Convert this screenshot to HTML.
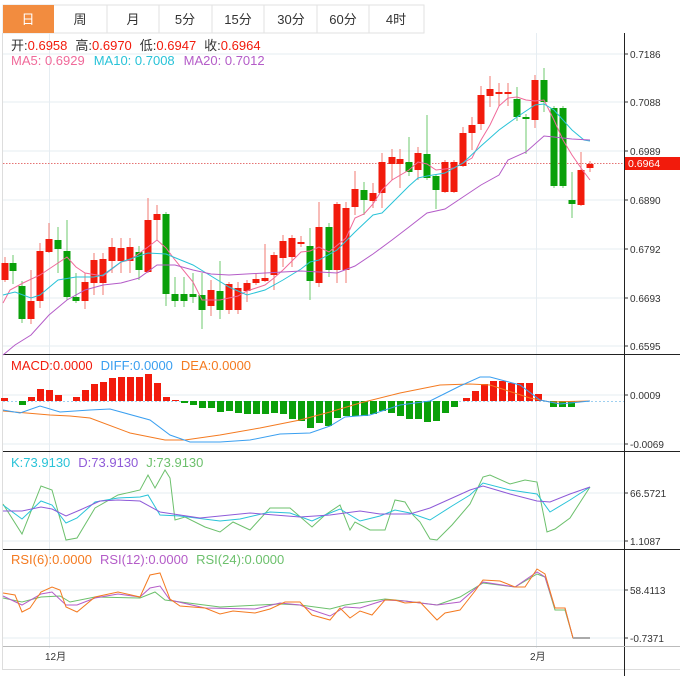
<!DOCTYPE html>
<html><head><meta charset="utf-8"><style>
html,body{margin:0;padding:0;background:#fff;width:680px;height:676px;overflow:hidden}
svg{display:block;font-family:"Liberation Sans","Noto Sans CJK SC",sans-serif}
</style></head><body>
<svg width="680" height="676" viewBox="0 0 680 676" xmlns="http://www.w3.org/2000/svg">
<!-- tabs -->
<rect x="3" y="5" width="421" height="28" fill="#fff" stroke="#e2e2e2"/>
<rect x="3" y="5" width="51" height="28" fill="#f28c3f"/>
<g stroke="#e2e2e2"><line x1="107" y1="5" x2="107" y2="33"/><line x1="159" y1="5" x2="159" y2="33"/><line x1="212" y1="5" x2="212" y2="33"/><line x1="264" y1="5" x2="264" y2="33"/><line x1="317" y1="5" x2="317" y2="33"/><line x1="369" y1="5" x2="369" y2="33"/></g>
<g font-size="13" text-anchor="middle" fill="#333">
<text x="28" y="24" fill="#fff">日</text><text x="80" y="24">周</text><text x="133" y="24">月</text><text x="185" y="24">5分</text><text x="238" y="24">15分</text><text x="291" y="24">30分</text><text x="343" y="24">60分</text><text x="396" y="24">4时</text>
</g>
<!-- frame -->
<line x1="2.5" y1="33" x2="2.5" y2="669" stroke="#ddd"/>
<line x1="2" y1="669.5" x2="680" y2="669.5" stroke="#ddd"/>
<line x1="624.5" y1="33" x2="624.5" y2="676" stroke="#222"/>
<!-- grids -->
<g stroke="#e6edf2">
<line x1="3" y1="54" x2="624" y2="54"/><line x1="3" y1="102" x2="624" y2="102"/><line x1="3" y1="151" x2="624" y2="151"/><line x1="3" y1="200" x2="624" y2="200"/><line x1="3" y1="249" x2="624" y2="249"/><line x1="3" y1="298" x2="624" y2="298"/><line x1="3" y1="346" x2="624" y2="346"/>
<line x1="3" y1="395" x2="624" y2="395"/><line x1="3" y1="444" x2="624" y2="444"/>
<line x1="3" y1="493" x2="624" y2="493"/><line x1="3" y1="541" x2="624" y2="541"/>
<line x1="3" y1="590" x2="624" y2="590"/><line x1="3" y1="638" x2="624" y2="638"/>
<line x1="49.5" y1="33" x2="49.5" y2="648"/><line x1="536.5" y1="33" x2="536.5" y2="648"/>
</g>
<g stroke="#222"><line x1="3" y1="354.5" x2="680" y2="354.5"/><line x1="3" y1="451.5" x2="680" y2="451.5"/><line x1="3" y1="549.5" x2="680" y2="549.5"/></g>
<line x1="3" y1="646.5" x2="680" y2="646.5" stroke="#bbb"/>
<!-- axis labels -->
<g font-size="10" fill="#333">
<g stroke="#333"><line x1="624" y1="54" x2="628" y2="54"/><line x1="624" y1="102" x2="628" y2="102"/><line x1="624" y1="151" x2="628" y2="151"/><line x1="624" y1="200" x2="628" y2="200"/><line x1="624" y1="249" x2="628" y2="249"/><line x1="624" y1="298" x2="628" y2="298"/><line x1="624" y1="346" x2="628" y2="346"/><line x1="624" y1="395" x2="628" y2="395"/><line x1="624" y1="444" x2="628" y2="444"/><line x1="624" y1="493" x2="628" y2="493"/><line x1="624" y1="541" x2="628" y2="541"/><line x1="624" y1="590" x2="628" y2="590"/><line x1="624" y1="638" x2="628" y2="638"/></g>
<text x="630" y="58">0.7186</text><text x="630" y="106">0.7088</text><text x="630" y="155">0.6989</text><text x="630" y="204">0.6890</text><text x="630" y="253">0.6792</text><text x="630" y="302">0.6693</text><text x="630" y="350">0.6595</text>
<text x="630" y="399">0.0009</text><text x="630" y="448">-0.0069</text>
<text x="630" y="497">66.5721</text><text x="630" y="545">1.1087</text>
<text x="630" y="594">58.4113</text><text x="630" y="642">-0.7371</text>
<text x="45" y="660">12月</text><text x="530" y="660">2月</text>
</g>
<!-- current price -->
<line x1="3" y1="163.5" x2="624" y2="163.5" stroke="#e57373" stroke-dasharray="1.5,1.5"/>
<rect x="625" y="157" width="55" height="13" fill="#f21b0c"/>
<text x="628" y="167" font-size="10.5" fill="#fff">0.6964</text>
<!-- info text -->
<g font-size="13">
<text x="11" y="50" fill="#333">开:<tspan fill="#f21b0c">0.6958</tspan><tspan dx="8">高:</tspan><tspan fill="#f21b0c">0.6970</tspan><tspan dx="8">低:</tspan><tspan fill="#f21b0c">0.6947</tspan><tspan dx="8">收:</tspan><tspan fill="#f21b0c">0.6964</tspan></text>
<text x="11" y="65"><tspan fill="#f06a9a">MA5: 0.6929</tspan><tspan dx="9" fill="#29c3d8">MA10: 0.7008</tspan><tspan dx="9" fill="#b45cc8">MA20: 0.7012</tspan></text>
<text x="11" y="370"><tspan fill="#f21b0c">MACD:0.0000</tspan><tspan dx="8" fill="#3a9ff0">DIFF:0.0000</tspan><tspan dx="8" fill="#f47a20">DEA:0.0000</tspan></text>
<text x="11" y="467"><tspan fill="#29c3d8">K:73.9130</tspan><tspan dx="8" fill="#8e5ad8">D:73.9130</tspan><tspan dx="8" fill="#6cc06c">J:73.9130</tspan></text>
<text x="11" y="564"><tspan fill="#f47a20">RSI(6):0.0000</tspan><tspan dx="8" fill="#b45cc8">RSI(12):0.0000</tspan><tspan dx="8" fill="#6cc06c">RSI(24):0.0000</tspan></text>
</g>
<!-- candles: wicks -->
<g stroke-width="1">
<g stroke="#f07a70">
<path d="M5 257V282M31 270V324M40 243V308M49 223V253M85 273V309M94 253V295M103 253V295M112 238V273M121 238V273M130 238V273M148 198V273M157 205V240M211 280V316M229 282V314M238 282V314M247 280V302M256 273V285M265 244V282M274 252V290M283 235V267M292 235V267M301 236V247M319 202V287M337 202V283M346 202V283M355 171V215M373 183V208M382 153V208M392 149V180M400 149V188M418 147V180M445 160V193M454 160V193M463 127V167M472 117V150M481 86V130M490 76V107M499 83V106M508 83V106M535 75V128M581 152V206M590 161V172"/>
</g>
<g stroke="#6cc86c">
<path d="M13 255V284M22 281V323M58 227V273M67 220V300M76 273V303M139 246V280M166 212V306M175 277V307M184 277V307M193 273V303M202 273V329M220 261V319M310 228V300M329 223V277M364 182V215M409 137V176M427 115V180M436 175V209M517 87V121M526 114V154M544 68V112M554 106V188M563 106V188M572 172V218"/>
</g>
</g>
<!-- candle bodies -->
<g fill="#f21b0c">
<rect x="1.5" y="263" width="7" height="17"/><rect x="27.5" y="301" width="7" height="18"/><rect x="36.5" y="251" width="7" height="50"/><rect x="45.5" y="239" width="7" height="13"/><rect x="81.5" y="282" width="7" height="19"/><rect x="90.5" y="260" width="7" height="23"/><rect x="99.5" y="259" width="7" height="24"/><rect x="108.5" y="247" width="7" height="14"/><rect x="117.5" y="248" width="7" height="13"/><rect x="126.5" y="247" width="7" height="14"/><rect x="144.5" y="220" width="7" height="52"/><rect x="153.5" y="214" width="7" height="6"/><rect x="207.5" y="290" width="7" height="16"/><rect x="225.5" y="284" width="7" height="26"/><rect x="234.5" y="288" width="7" height="22"/><rect x="243.5" y="283" width="7" height="8"/><rect x="252.5" y="279" width="7" height="4"/><rect x="261.5" y="278" width="7" height="3"/><rect x="270.5" y="255" width="7" height="20"/><rect x="279.5" y="241" width="7" height="17"/><rect x="288.5" y="238" width="7" height="19"/><rect x="297.5" y="242" width="7" height="2"/><rect x="315.5" y="227" width="7" height="56"/><rect x="333.5" y="204" width="7" height="66"/><rect x="342.5" y="208" width="7" height="62"/><rect x="351.5" y="189" width="7" height="18"/><rect x="369.5" y="193" width="7" height="8"/><rect x="378.5" y="162" width="7" height="31"/><rect x="388.5" y="157" width="7" height="7"/><rect x="396.5" y="159" width="7" height="5"/><rect x="414.5" y="153" width="7" height="17"/><rect x="441.5" y="162" width="7" height="30"/><rect x="450.5" y="162" width="7" height="30"/><rect x="459.5" y="133" width="7" height="33"/><rect x="468.5" y="125" width="7" height="8"/><rect x="477.5" y="95" width="7" height="29"/><rect x="486.5" y="89" width="7" height="7"/><rect x="495.5" y="92" width="7" height="2"/><rect x="504.5" y="92" width="7" height="2"/><rect x="531.5" y="80" width="7" height="40"/><rect x="577.5" y="170" width="7" height="35"/><rect x="586.5" y="164" width="7" height="4"/>
</g>
<g fill="#0aa00a">
<rect x="9.5" y="263" width="7" height="8"/><rect x="18.5" y="286" width="7" height="33"/><rect x="54.5" y="240" width="7" height="9"/><rect x="63.5" y="251" width="7" height="46"/><rect x="72.5" y="297" width="7" height="4"/><rect x="135.5" y="252" width="7" height="18"/><rect x="162.5" y="214" width="7" height="80"/><rect x="171.5" y="294" width="7" height="7"/><rect x="180.5" y="294" width="7" height="7"/><rect x="189.5" y="294" width="7" height="3"/><rect x="198.5" y="295" width="7" height="15"/><rect x="216.5" y="291" width="7" height="19"/><rect x="306.5" y="246" width="7" height="35"/><rect x="325.5" y="227" width="7" height="43"/><rect x="360.5" y="190" width="7" height="10"/><rect x="405.5" y="162" width="7" height="10"/><rect x="423.5" y="154" width="7" height="24"/><rect x="432.5" y="176" width="7" height="14"/><rect x="513.5" y="99" width="7" height="18"/><rect x="522.5" y="117" width="7" height="2"/><rect x="540.5" y="80" width="7" height="22"/><rect x="550.5" y="108" width="7" height="78"/><rect x="559.5" y="108" width="7" height="78"/><rect x="568.5" y="200" width="7" height="4"/>
</g>
<!-- MA lines -->
<g fill="none" stroke-width="1">
<polyline stroke="#f06a9a" points="3,303 10,290 23,283 40,275 58,263 67,257 76,267 85,273 103,276 121,262 130,260 148,247 157,240 166,248 175,260 193,282 202,300 220,300 238,296 247,291 265,285 274,278 283,270 301,252 310,251 319,247 329,252 346,238 355,218 364,214 373,204 382,190 392,180 409,170 418,162 427,164 436,170 454,168 463,163 472,158 481,140 490,125 499,106 508,98 517,97 526,100 535,101 544,100 554,120 563,140 572,155 581,168 590,180"/>
<polyline stroke="#29c3d8" points="3,295 15,292 31,298 40,295 58,280 76,277 94,277 103,275 121,262 148,253 166,254 193,265 211,276 229,287 247,295 265,290 283,280 301,269 310,262 319,260 337,250 355,232 373,215 382,213 392,203 409,186 418,178 427,176 445,173 463,163 481,146 499,130 517,117 535,105 544,104 554,110 563,120 572,130 584,140 590,141"/>
<polyline stroke="#b45cc8" points="3,355 15,345 31,335 49,315 67,300 85,290 103,285 121,283 139,278 157,265 175,265 193,270 211,274 229,275 265,273 301,271 319,272 337,273 355,266 373,254 392,240 409,227 427,213 445,209 463,197 481,185 499,175 508,160 526,152 544,136 554,137 572,139 590,140"/>
</g>
<!-- MACD -->
<line x1="3" y1="401.5" x2="624" y2="401.5" stroke="#9fd0f0" stroke-dasharray="2,2"/>
<g fill="#f21b0c">
<rect x="1" y="398" width="7" height="3"/><rect x="28" y="397" width="7" height="4"/><rect x="37" y="389" width="7" height="12"/><rect x="46" y="390" width="7" height="11"/><rect x="55" y="395" width="7" height="6"/><rect x="73" y="397" width="7" height="4"/><rect x="82" y="390" width="7" height="11"/><rect x="91" y="384" width="7" height="17"/><rect x="100" y="382" width="7" height="19"/><rect x="109" y="378" width="7" height="23"/><rect x="118" y="377" width="7" height="24"/><rect x="127" y="377" width="7" height="24"/><rect x="136" y="377" width="7" height="24"/><rect x="145" y="374" width="7" height="27"/><rect x="154" y="383" width="7" height="18"/><rect x="163" y="397" width="7" height="4"/><rect x="172" y="400" width="7" height="1"/>
<rect x="463" y="398" width="7" height="3"/><rect x="472" y="391" width="7" height="10"/><rect x="481" y="384" width="7" height="17"/><rect x="490" y="381" width="7" height="20"/><rect x="499" y="381" width="7" height="20"/><rect x="508" y="383" width="7" height="18"/><rect x="517" y="383" width="7" height="18"/><rect x="526" y="383" width="7" height="18"/><rect x="535" y="394" width="7" height="7"/>
</g>
<g fill="#0aa00a">
<rect x="19" y="401" width="7" height="4"/>
<rect x="181" y="401" width="7" height="2"/><rect x="190" y="401" width="7" height="4"/><rect x="199" y="401" width="7" height="7"/><rect x="208" y="401" width="7" height="7"/><rect x="217" y="401" width="7" height="11"/><rect x="226" y="401" width="7" height="10"/><rect x="235" y="401" width="7" height="12"/><rect x="244" y="401" width="7" height="13"/><rect x="253" y="401" width="7" height="13"/><rect x="262" y="401" width="7" height="13"/><rect x="271" y="401" width="7" height="12"/><rect x="280" y="401" width="7" height="13"/><rect x="289" y="401" width="7" height="18"/><rect x="298" y="401" width="7" height="20"/><rect x="307" y="401" width="7" height="27"/><rect x="316" y="401" width="7" height="22"/><rect x="325" y="401" width="7" height="25"/><rect x="334" y="401" width="7" height="17"/><rect x="343" y="401" width="7" height="15"/><rect x="352" y="401" width="7" height="15"/><rect x="361" y="401" width="7" height="15"/><rect x="370" y="401" width="7" height="13"/><rect x="379" y="401" width="7" height="10"/><rect x="388" y="401" width="7" height="12"/><rect x="397" y="401" width="7" height="15"/><rect x="406" y="401" width="7" height="18"/><rect x="415" y="401" width="7" height="18"/><rect x="424" y="401" width="7" height="21"/><rect x="433" y="401" width="7" height="20"/><rect x="442" y="401" width="7" height="12"/><rect x="451" y="401" width="7" height="6"/>
<rect x="550" y="401" width="7" height="6"/><rect x="559" y="401" width="7" height="6"/><rect x="568" y="401" width="7" height="6"/>
</g>
<g fill="none" stroke-width="1">
<polyline stroke="#f47a20" points="3,411 50,415 70,416 90,418 130,433 165,440 185,440 220,435 260,428 300,420 330,412 360,403 400,393 440,385 470,384 490,385 530,398 550,402 590,401"/>
<polyline stroke="#3a9ff0" points="3,410 20,413 40,406 60,412 90,410 110,409 150,420 170,435 190,442 220,442 250,440 280,434 310,433 330,426 345,417 370,415 400,405 430,401 460,386 480,377 490,377 520,385 540,400 560,404 590,401"/>
</g>
<!-- KDJ -->
<g fill="none" stroke-width="1">
<polyline stroke="#6cc06c" points="3,504 22,534 41,486 52,490 66,540 77,538 95,508 118,495 140,490 148,475 155,488 165,470 170,478 175,520 185,517 205,527 220,532 233,522 250,530 270,508 290,508 312,527 325,515 340,505 350,530 355,522 370,530 385,530 395,500 405,502 413,515 420,522 430,539 437,540 452,525 470,504 483,477 490,475 510,484 525,480 537,482 547,532 555,529 570,518 590,487"/>
<polyline stroke="#29c3d8" points="3,505 22,519 41,501 52,505 66,523 77,518 95,502 118,498 140,497 148,495 160,515 180,516 220,521 240,519 270,512 290,513 312,521 325,515 340,509 360,521 380,516 395,510 410,513 430,520 452,506 470,495 483,483 510,490 537,494 550,512 570,500 590,487"/>
<polyline stroke="#8e5ad8" points="3,511 22,511 41,507 52,509 66,516 80,510 100,501 118,500 140,501 160,512 200,518 250,513 300,517 330,515 360,511 380,514 410,514 430,508 470,490 483,486 510,494 537,501 550,502 570,494 590,487"/>
</g>
<!-- RSI -->
<g fill="none" stroke-width="1">
<polyline stroke="#6cc06c" points="3,598 22,602 41,597 60,596 70,602 95,597 140,598 155,592 165,600 220,607 280,604 300,605 330,609 345,605 385,599 405,601 437,605 460,597 483,583 515,587 537,574 545,577 555,610 565,610 573,638 590,638"/>
<polyline stroke="#b45cc8" points="3,596 22,605 41,594 52,592 66,605 77,605 95,598 118,594 140,597 150,588 160,586 170,600 205,608 255,609 280,603 300,605 312,610 330,616 345,607 360,608 385,600 405,601 420,603 437,605 460,602 483,582 515,587 537,572 545,577 555,608 565,608 573,638 590,638"/>
<polyline stroke="#f47a20" points="3,593 15,595 22,612 30,608 41,592 52,587 60,590 66,607 77,612 95,597 118,592 140,597 150,575 160,573 170,599 180,606 205,608 220,614 233,611 255,613 270,609 285,602 300,602 312,615 330,620 340,608 350,618 360,611 372,615 385,600 395,600 405,603 420,602 437,620 445,613 460,610 475,591 483,580 500,581 515,587 525,587 537,569 545,574 555,608 565,608 573,638 590,638"/>
<line x1="573" y1="638" x2="590" y2="638" stroke="#aaa" stroke-width="2"/>
</g>
</svg>
</body></html>
